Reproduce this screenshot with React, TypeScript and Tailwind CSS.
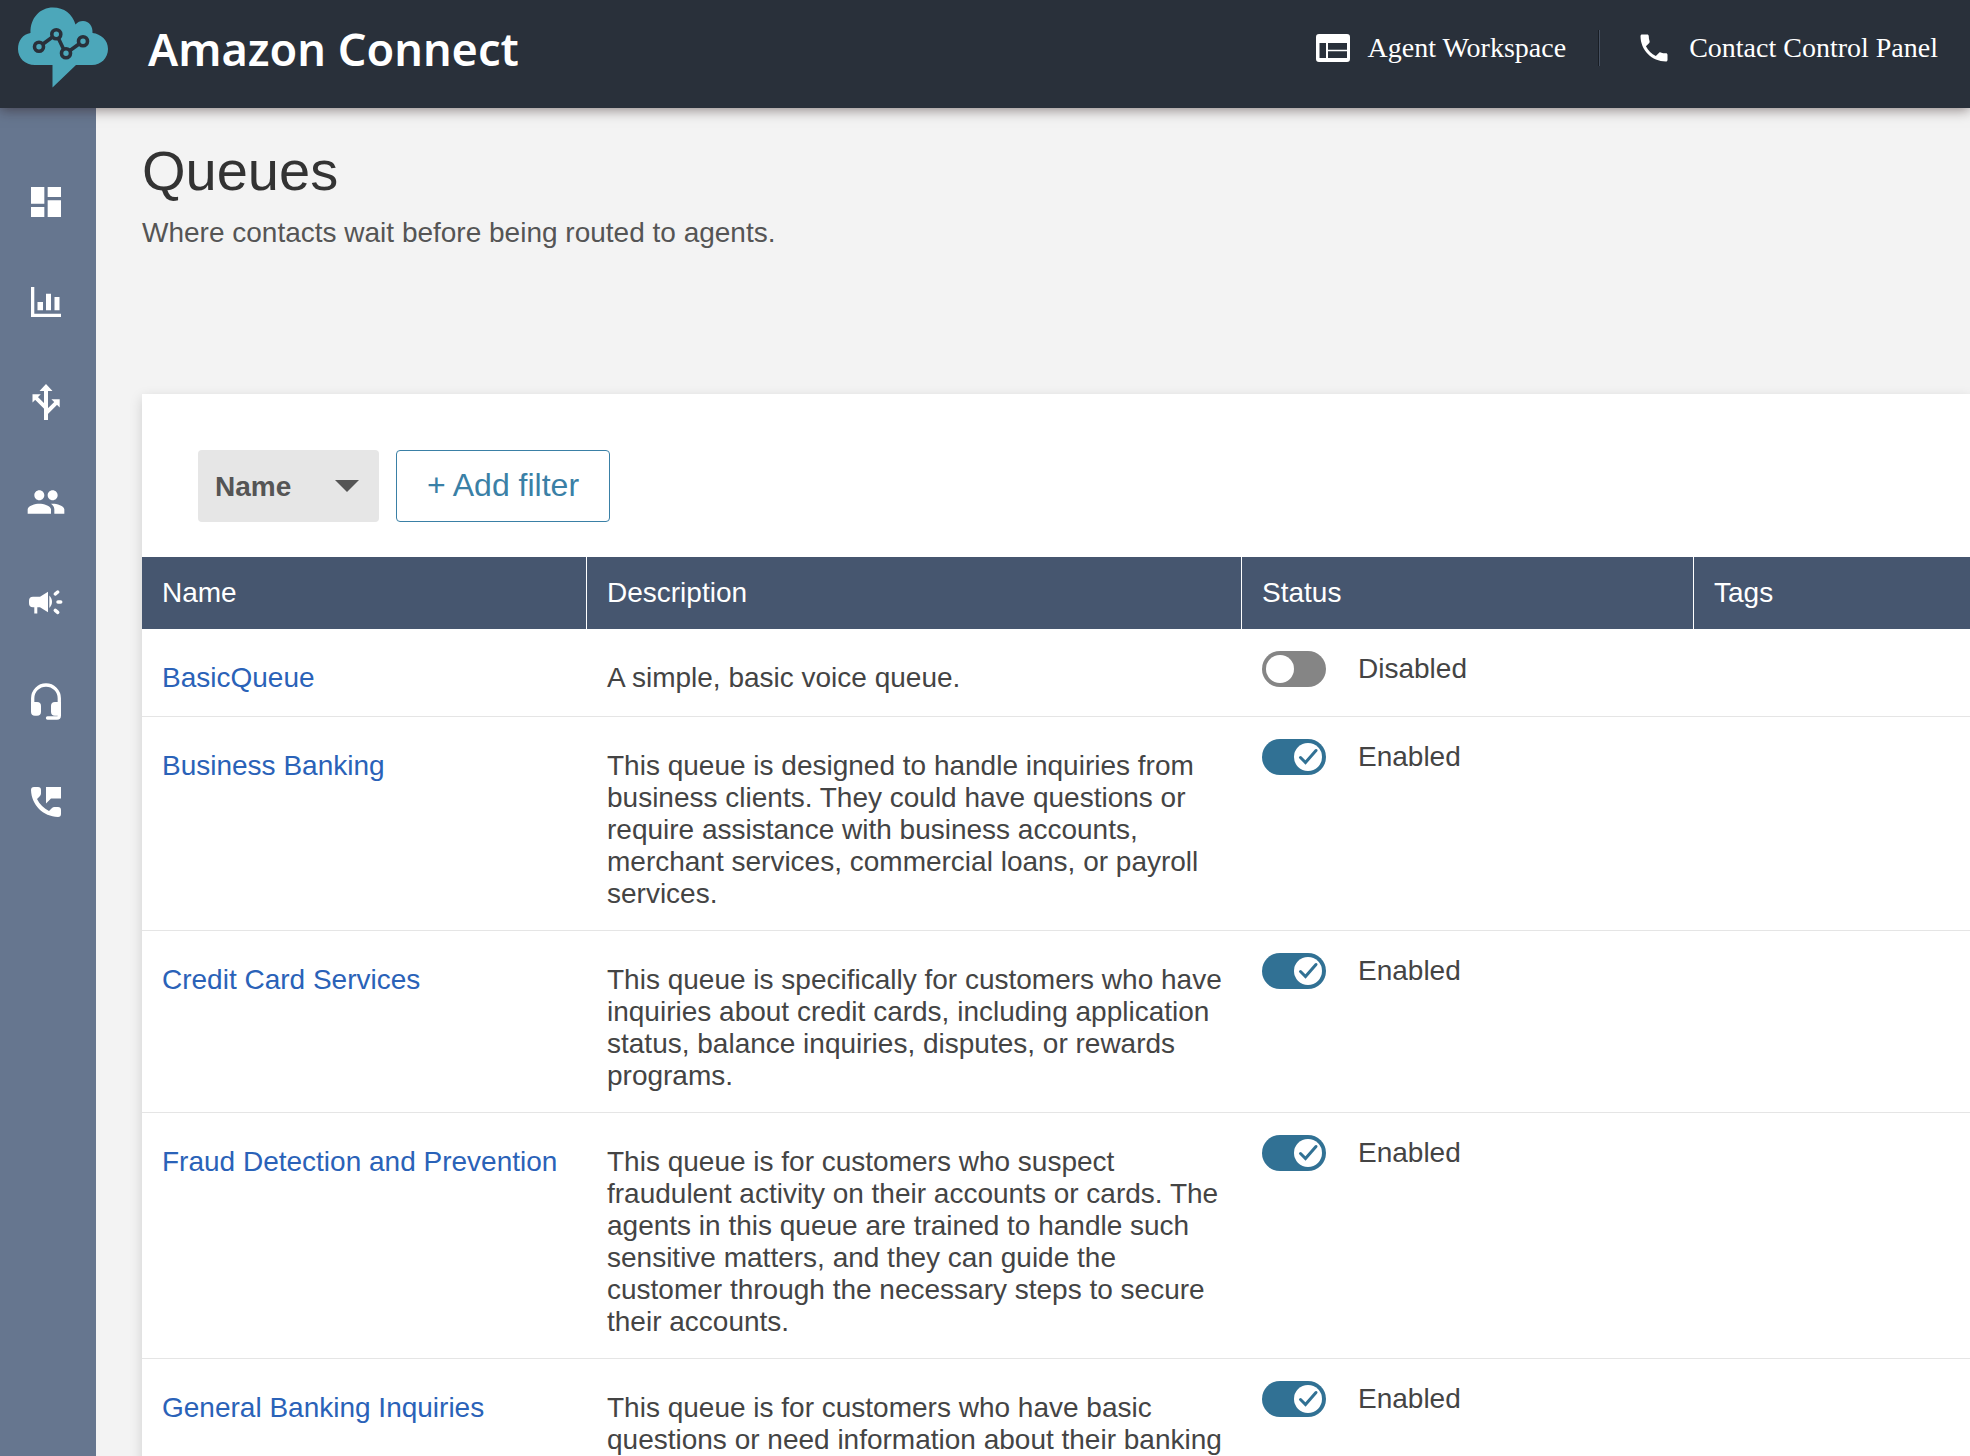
import { useState } from "react";
import type { ReactNode } from "react";
import { MdDashboard, MdPeople, MdPhone } from "react-icons/md";

type Queue = { name: string; description: string; enabled: boolean };

const queues: Queue[] = [
  { name: "BasicQueue", description: "A simple, basic voice queue.", enabled: false },
  {
    name: "Business Banking",
    description:
      "This queue is designed to handle inquiries from business clients. They could have questions or require assistance with business accounts, merchant services, commercial loans, or payroll services.",
    enabled: true,
  },
  {
    name: "Credit Card Services",
    description:
      "This queue is specifically for customers who have inquiries about credit cards, including application status, balance inquiries, disputes, or rewards programs.",
    enabled: true,
  },
  {
    name: "Fraud Detection and Prevention",
    description:
      "This queue is for customers who suspect fraudulent activity on their accounts or cards. The agents in this queue are trained to handle such sensitive matters, and they can guide the customer through the necessary steps to secure their accounts.",
    enabled: true,
  },
  {
    name: "General Banking Inquiries",
    description:
      "This queue is for customers who have basic questions or need information about their banking",
    enabled: true,
  },
];

function Logo() {
  return (
    <svg viewBox="0 0 90 82" className="h-[82px] w-[90px]" aria-hidden="true">
      <path
        fill="#4ca7ba"
        d="M12.5 27C12 12 22 1.500 35 1.500c11 0 19.500 6.500 22.500 17C59.500 16 62 15 65 15c6 0 10 5 9.500 12C83 28 90 34 90 43c0 9-7 16-16 16H58L34.500 81.500V59H17C7 59 0 52 0 43c0-8.500 5-15 12.500-16Z"
      />
      <g fill="none" stroke="#29303a" strokeWidth="3.600">
        <circle cx="21" cy="40.700" r="4.500" />
        <circle cx="38.300" cy="28.300" r="4.500" />
        <circle cx="48" cy="47.300" r="4.500" />
        <circle cx="65" cy="35.300" r="4.500" />
        <path d="m25 38 9.500-7M40.500 32.500l5 10.500M52 44.500l9-6.500" />
      </g>
    </svg>
  );
}

function WorkspaceIcon() {
  return (
    <svg viewBox="0 0 34 28" className="h-7 w-[34px]" aria-hidden="true">
      <path
        fill="#fff"
        fillRule="evenodd"
        d="M3 0h28a3 3 0 0 1 3 3v22a3 3 0 0 1-3 3H3a3 3 0 0 1-3-3V3a3 3 0 0 1 3-3Zm.500 9v15H10V9H3.500ZM12 9v6.700h19V9H12Zm0 8.300V24h19v-6.700H12Z"
      />
    </svg>
  );
}

function ChartIcon() {
  return (
    <svg viewBox="0 0 40 40" className="size-10" fill="currentColor" aria-hidden="true">
      <path d="M5 5h3.300v26.700H35V35H5V5Zm6.500 15H17v8.300h-5.500V20Zm8.500-8.300h5v16.600h-5V11.700Zm8.500 3.300h5v13.300h-5V15Z" />
    </svg>
  );
}

function RoutingIcon() {
  return (
    <svg viewBox="0 0 40 40" className="size-10" aria-hidden="true">
      <path fill="currentColor" d="M20 2 26.500 9h-13L20 2ZM6.500 12.300h8.300l-8.300 8.300v-8.300ZM33.700 17.300v8.300l-8.300-8.300h8.300Z" />
      <path fill="none" stroke="currentColor" strokeWidth="4" d="M20 8v30M9.500 15.300 20 25.800M30.700 20.300 20 31" />
    </svg>
  );
}

function CampaignIcon() {
  return (
    <svg viewBox="0 0 40 40" className="size-10" fill="currentColor" aria-hidden="true">
      <path d="M7 14.700h7l8-5v20.600l-8-5h-2.700v6.200H8.300v-6.200H7a4 4 0 0 1-4-4v-2.600a4 4 0 0 1 4-4Z" />
      <path d="M23.300 13.500c3.600 3.500 3.600 9 0 12.500V13.500Z" />
      <path fill="none" stroke="currentColor" strokeWidth="3.500" strokeLinecap="round" d="m29.300 12 2.400-2M32 20h2.700M29.300 28.300l2.400 2" />
    </svg>
  );
}

function HeadsetIcon() {
  return (
    <svg viewBox="0 0 40 40" className="size-10" aria-hidden="true">
      <path
        fill="none"
        stroke="currentColor"
        strokeWidth="3.300"
        strokeLinecap="round"
        d="M6.700 24v-7.700a13.300 13.300 0 0 1 26.600 0v17.400a2.300 2.300 0 0 1-2.300 2.300h-9.500"
      />
      <path fill="currentColor" d="M5 20h6a4 4 0 0 1 4 4v5.700a4 4 0 0 1-4 4H9a4 4 0 0 1-4-4V20ZM35 20h-6a4 4 0 0 0-4 4v5.700a4 4 0 0 0 4 4h6V20Z" />
    </svg>
  );
}

function PhoneMessageIcon() {
  return (
    <svg viewBox="0 0 40 40" className="size-10" fill="currentColor" aria-hidden="true">
      <path d="M20 5h15v11.500H25L20 21.500V5Z" />
      <path d="M8 5h4a3 3 0 0 1 3 3v3.500c0 1-.300 1.700-1 2.400l-3 3c2.500 5 7 9.500 12 12l3-3c.700-.700 1.400-1 2.400-1H32a3 3 0 0 1 3 3V32a3 3 0 0 1-3 3C17 34.500 5.500 23 5 8a3 3 0 0 1 3-3Z" />
    </svg>
  );
}

const navItems: { label: string; icon: ReactNode }[] = [
  { label: "Dashboard", icon: <MdDashboard className="size-10" /> },
  { label: "Analytics", icon: <ChartIcon /> },
  { label: "Routing", icon: <RoutingIcon /> },
  { label: "Users", icon: <MdPeople className="size-10" /> },
  { label: "Campaigns", icon: <CampaignIcon /> },
  { label: "Agent applications", icon: <HeadsetIcon /> },
  { label: "Channels", icon: <PhoneMessageIcon /> },
];

function Toggle({ name, initial }: { name: string; initial: boolean }) {
  const [on, setOn] = useState(initial);
  return (
    <label className="relative flex h-9 cursor-pointer items-center gap-8">
      <input
        type="checkbox"
        role="switch"
        className="sr-only"
        aria-label={`${name} status`}
        checked={on}
        onChange={(e) => setOn(e.target.checked)}
      />
      <span
        className={
          on
            ? "flex h-9 w-16 items-center justify-end rounded-full bg-[#317194] p-1"
            : "flex h-9 w-16 items-center rounded-full bg-[#858585] p-1"
        }
      >
        <span className="flex size-7 items-center justify-center rounded-full bg-white">
          {on && (
            <svg viewBox="0 0 28 28" className="size-7" aria-hidden="true">
              <path d="m6.500 14.500 5 5L22 7.500" fill="none" stroke="#317194" strokeWidth="3" strokeLinecap="round" />
            </svg>
          )}
        </span>
      </span>
      <span>{on ? "Enabled" : "Disabled"}</span>
    </label>
  );
}

export default function App() {
  return (
    <div className="flex h-screen flex-col overflow-hidden bg-[#f3f3f3] font-['Liberation_Sans',Arial,sans-serif] text-[28px] leading-8 text-[#444]">
      <header className="z-10 flex h-[108px] shrink-0 justify-between bg-[#29303a] pr-8 pl-[18px] text-white shadow-[0_2px_12px_rgba(40,20,20,0.5)]">
        <div className="flex items-start gap-10 pt-[6px]">
          <Logo />
          <span className="pt-[10px] font-['Noto_Sans',sans-serif] text-[45px] leading-[66px] font-semibold">Amazon Connect</span>
        </div>
        <nav aria-label="Tools" className="flex h-24 items-center font-['Liberation_Serif',serif]">
          <a href="#workspace" className="flex items-center gap-[18px]">
            <WorkspaceIcon />
            Agent Workspace
          </a>
          <span className="mr-9 ml-8 h-9 w-[2px] border-l border-[#181d24] bg-[#465060]" />
          <a href="#ccp" className="flex items-center gap-[17px]">
            <MdPhone className="size-9" />
            Contact Control Panel
          </a>
        </nav>
      </header>
      <div className="flex min-h-0 flex-1">
        <nav aria-label="Main" className="flex w-24 shrink-0 flex-col items-start gap-[60px] bg-[#66768f] pt-[74px] pl-[26px] text-white">
          {navItems.map((item) => (
            <a key={item.label} href="#nav" aria-label={item.label}>
              {item.icon}
            </a>
          ))}
        </nav>
        <main className="min-w-0 flex-1 overflow-hidden pl-[46px]">
          <h1 className="pt-[31px] text-[56px] leading-16 text-[#333]">Queues</h1>
          <p className="pt-[14px] text-[#555]">Where contacts wait before being routed to agents.</p>
          <section className="mt-[145px] bg-white pt-14 shadow-[0_4px_12px_rgba(0,0,0,0.15)]">
            <div className="flex gap-[17px] pb-[35px] pl-14">
              <div className="relative">
                <select
                  aria-label="Filter by"
                  className="h-[72px] w-[181px] appearance-none rounded-sm bg-[#e6e6e6] pt-[2px] pl-[17px] font-bold text-[#555]"
                >
                  <option>Name</option>
                </select>
                <svg viewBox="0 0 24 12" className="pointer-events-none absolute top-[30px] right-5 h-3 w-6" aria-hidden="true">
                  <path d="M0 0h24L12 12Z" fill="#555" />
                </svg>
              </div>
              <button type="button" className="h-[72px] w-[214px] rounded-sm border border-[#3a80a6] pb-[2px] text-[32px] text-[#3a80a6]">
                + Add filter
              </button>
            </div>
            <table className="w-full table-fixed border-separate border-spacing-0 text-left">
              <colgroup>
                <col className="w-[445px]" />
                <col className="w-[655px]" />
                <col className="w-[452px]" />
                <col />
              </colgroup>
              <thead>
                <tr className="h-[72px] bg-[#46566f] text-white">
                  <th scope="col" className="border-r border-white px-5 font-normal">Name</th>
                  <th scope="col" className="border-r border-white px-5 font-normal">Description</th>
                  <th scope="col" className="border-r border-white px-5 font-normal">Status</th>
                  <th scope="col" className="px-5 font-normal">Tags</th>
                </tr>
              </thead>
              <tbody>
                {queues.map((q) => (
                  <tr key={q.name} className="h-[88px] align-top">
                    <td className="border-b border-[#e5e5e5] px-5 pt-[33px] pb-5">
                      <a href="#queue" className="text-[#2a62b8]">{q.name}</a>
                    </td>
                    <td className="border-b border-[#e5e5e5] pt-[33px] pr-4 pb-5 pl-5">{q.description}</td>
                    <td className="border-b border-[#e5e5e5] px-5 pt-[22px]">
                      <Toggle name={q.name} initial={q.enabled} />
                    </td>
                    <td className="border-b border-[#e5e5e5]" />
                  </tr>
                ))}
              </tbody>
            </table>
          </section>
        </main>
      </div>
    </div>
  );
}
